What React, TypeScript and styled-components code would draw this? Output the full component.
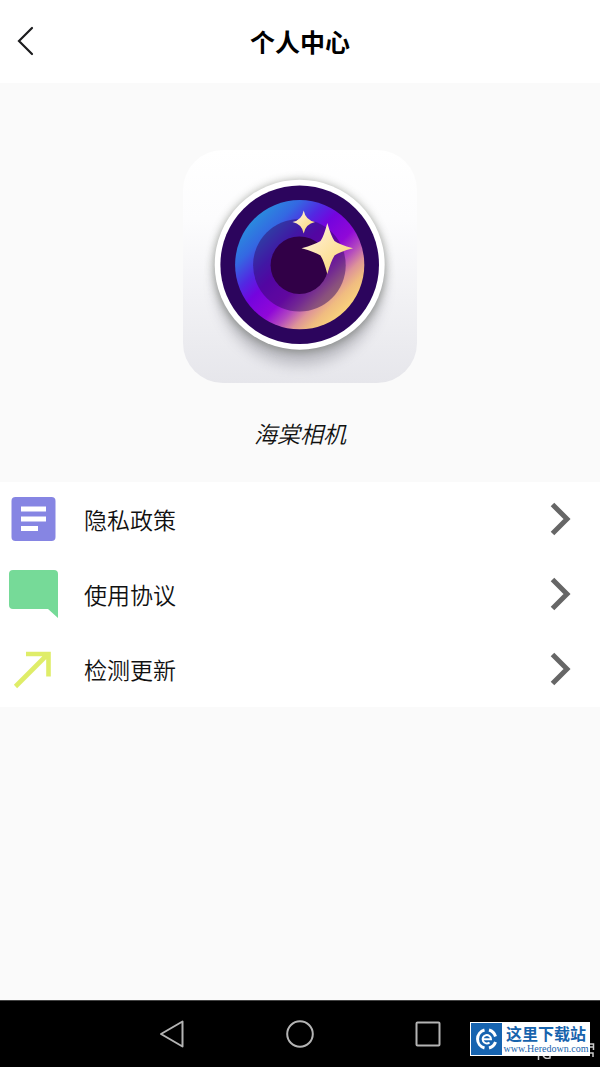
import React from "react";
import styled, { createGlobalStyle } from "styled-components";

const GlobalStyle = createGlobalStyle`
  * { box-sizing: border-box; }
  body {
    margin: 0;
    background: #fafafa;
    color: #111;
    font-family: "Noto Sans CJK SC", "Noto Sans", sans-serif;
  }
  button { margin: 0; padding: 0; border: 0; background: none; color: inherit; font: inherit; cursor: pointer; }
  svg { display: block; flex: none; }
`;

const Page = styled.div`
  display: flex;
  flex-direction: column;
  min-height: 100vh;
`;

const Header = styled.header`
  display: grid;
  grid-template-columns: 52px 1fr 52px;
  align-items: center;
  height: 83px;
  padding-bottom: 1px;
  background: #fff;
`;

const BackButton = styled.button`
  display: flex;
  align-items: center;
  justify-content: center;
  height: 52px;
`;

const Title = styled.h1`
  margin: 0;
  text-align: center;
  font-size: 25px;
  line-height: 34px;
  font-weight: 700;
  color: #000;
`;

const Main = styled.main`
  flex: 1;
`;

const Profile = styled.section`
  display: flex;
  flex-direction: column;
  align-items: center;
  gap: 32px;
  padding: 67px 0 32px;
`;

const AppName = styled.p`
  margin: 0;
  font-size: 23px;
  line-height: 34px;
  font-style: italic;
  font-weight: 350;
`;

const Menu = styled.ul`
  margin: 0;
  padding: 0;
  list-style: none;
  background: #fff;
`;

const MenuRow = styled.button`
  display: flex;
  align-items: center;
  width: 100%;
  height: 75px;
  padding: 0 27px 2px 8px;
  text-align: left;
`;

const MenuLabel = styled.span`
  flex: 1;
  padding-left: 25px;
  font-size: 23px;
  line-height: 34px;
  font-weight: 350;
`;

const SystemBar = styled.nav`
  position: relative;
  display: flex;
  justify-content: center;
  gap: 78px;
  height: 67px;
  background: #000;
  border-top: 1px solid #444;
`;

const SystemButton = styled.button`
  display: flex;
  align-items: center;
  justify-content: center;
  width: 50px;
  height: 66px;
`;

const Watermark = styled.div`
  position: absolute;
  right: 10px;
  bottom: 11px;
  display: flex;
  align-items: center;
  width: 120px;
  height: 34px;
  padding-left: 1px;
  background: #fff;
`;

const WatermarkText = styled.div`
  display: flex;
  flex-direction: column;
  align-items: center;
  flex: 1;
  color: #1763ad;
  white-space: nowrap;
`;

const SiteName = styled.span`
  font-size: 16px;
  line-height: 20px;
  font-weight: 700;
`;

const SiteUrl = styled.span`
  font-family: "Liberation Serif", serif;
  font-size: 10px;
  line-height: 12px;
`;

const Traces = styled.svg`
  position: absolute;
  right: 0;
  bottom: 0;
`;

const AppLogo = () => (
  <svg width="234" height="234" viewBox="0 0 234 234" role="img" aria-label="海棠相机">
    <defs>
      <linearGradient id="tile" x1="0" y1="0" x2="0" y2="1">
        <stop offset="0" stopColor="#fff" />
        <stop offset=".3" stopColor="#fcfcfd" />
        <stop offset="1" stopColor="#e6e6eb" />
      </linearGradient>
      <linearGradient id="lens" x1=".146" y1=".146" x2=".854" y2=".854">
        <stop offset="0" stopColor="#2a8ade" />
        <stop offset=".15" stopColor="#3468e2" />
        <stop offset=".3" stopColor="#5228e2" />
        <stop offset=".42" stopColor="#7404de" />
        <stop offset=".6" stopColor="#9008d8" />
        <stop offset=".71" stopColor="#b248c0" />
        <stop offset=".81" stopColor="#de9498" />
        <stop offset=".9" stopColor="#f0bc80" />
        <stop offset="1" stopColor="#f8d27c" />
      </linearGradient>
      <linearGradient id="star" x1="0" y1="0" x2="1" y2="1">
        <stop offset=".2" stopColor="#ffedd0" />
        <stop offset=".8" stopColor="#fbdc82" />
      </linearGradient>
      <filter id="soft" x="-30%" y="-30%" width="160%" height="160%">
        <feGaussianBlur stdDeviation="7" />
      </filter>
      <filter id="rim" x="-20%" y="-20%" width="140%" height="140%">
        <feGaussianBlur stdDeviation="4" />
      </filter>
    </defs>
    <rect width="234" height="233" rx="40" fill="url(#tile)" />
    <circle cx="116.7" cy="132" r="83" fill="#555562" opacity=".3" filter="url(#soft)" />
    <circle cx="116.7" cy="116" r="86" fill="#555a50" opacity=".5" filter="url(#rim)" />
    <circle cx="116.7" cy="114.7" r="85" fill="#fff" />
    <circle cx="116.7" cy="114.7" r="79.3" fill="#2c055d" />
    <circle cx="116.7" cy="114.7" r="64.6" fill="url(#lens)" />
    <circle cx="116.4" cy="115.2" r="46.3" fill="#2d0860" opacity=".48" />
    <circle cx="116.4" cy="115.2" r="28.8" fill="#310047" />
    <path d="M144.3 73Q148 86 151.500 91Q156 94.500 170 98.300Q156 102 151.500 105.500Q148 111 144.300 124Q141 111 137.500 105.500Q132 102 118.500 98.300Q132 94.500 137.500 91Q141 86 144.300 73Z" fill="url(#star)" />
    <path d="M120.7 60.5Q122.5 70 132 72Q122.5 74 120.7 83.5Q119 74 109.5 72Q119 70 120.7 60.5Z" fill="url(#star)" />
  </svg>
);

const PolicyIcon = () => (
  <svg width="51" height="51" viewBox="0 0 51 51" aria-hidden="true">
    <rect x="3.5" y="4" width="44" height="44" rx="4" fill="#8685e3" />
    <path d="M13 13.500h25v5H13zM13 23.500h25v5H13zM13 33h17v5H13z" fill="#fff" />
  </svg>
);

const AgreementIcon = () => (
  <svg width="51" height="51" viewBox="0 0 51 51" aria-hidden="true">
    <path d="M5 2H46Q50 2 50 6V50L40 41H5Q1 41 1 37V6Q1 2 5 2Z" fill="#76da98" />
  </svg>
);

const UpdateIcon = () => (
  <svg width="51" height="51" viewBox="0 0 51 51" aria-hidden="true">
    <path d="M7.5 43.5L40 11M18 11H40.5V33.5" fill="none" stroke="#dfed68" strokeWidth="4.6" />
  </svg>
);

const Chevron = () => (
  <svg width="24" height="34" viewBox="0 0 24 34" aria-hidden="true">
    <path d="M3.5 2.5L18 17L3.5 31.5" fill="none" stroke="#666" strokeWidth="5" />
  </svg>
);

const SiteLogo = () => (
  <svg width="31" height="32" viewBox="0 0 31 32" aria-hidden="true">
    <rect width="31" height="32" fill="#1764b0" />
    <g fill="none" stroke="#fff">
      <path d="M13.500 7A9.300 9.300 0 0 0 13.500 25M18 7A9.300 9.300 0 0 1 24.500 13.500M24.500 19A9.300 9.300 0 0 1 18 25" strokeWidth="3" />
      <path d="M12 16.300H20A4.200 4.200 0 1 0 18.500 19.500" strokeWidth="2" />
    </g>
  </svg>
);

const menu = [
  { label: "隐私政策", Icon: PolicyIcon },
  { label: "使用协议", Icon: AgreementIcon },
  { label: "检测更新", Icon: UpdateIcon },
];

export default function App() {
  return (
    <Page>
      <GlobalStyle />
      <Header>
        <BackButton aria-label="返回">
          <svg width="18" height="30" viewBox="0 0 18 30" aria-hidden="true">
            <path d="M15 2L2 15L15 28" fill="none" stroke="#1c1c1e" strokeWidth="2.200" strokeLinecap="round" />
          </svg>
        </BackButton>
        <Title>个人中心</Title>
      </Header>
      <Main>
        <Profile>
          <AppLogo />
          <AppName>海棠相机</AppName>
        </Profile>
        <Menu>
          {menu.map(({ label, Icon }) => (
            <li key={label}>
              <MenuRow>
                <Icon />
                <MenuLabel>{label}</MenuLabel>
                <Chevron />
              </MenuRow>
            </li>
          ))}
        </Menu>
      </Main>
      <SystemBar aria-label="系统导航">
        <SystemButton aria-label="后退">
          <svg width="28" height="30" viewBox="0 0 28 30" aria-hidden="true">
            <path d="M24.500 2.500V27.500L3 15Z" fill="none" stroke="#b4b4b4" strokeWidth="2" strokeLinejoin="round" />
          </svg>
        </SystemButton>
        <SystemButton aria-label="主屏幕">
          <svg width="28" height="28" viewBox="0 0 28 28" aria-hidden="true">
            <circle cx="14" cy="14" r="12.800" fill="none" stroke="#b4b4b4" strokeWidth="2" />
          </svg>
        </SystemButton>
        <SystemButton aria-label="最近任务">
          <svg width="26" height="26" viewBox="0 0 26 26" aria-hidden="true">
            <rect x="1.500" y="1.500" width="23" height="23" rx="1" fill="none" stroke="#b4b4b4" strokeWidth="2" />
          </svg>
        </SystemButton>
        <Traces width="70" height="26" viewBox="0 0 70 26" aria-hidden="true">
          <path d="M60 3H63.500V9M60 6H63M60 12H63V16M8.500 14V19M13 14Q14 18.500 20 17V14" fill="none" stroke="#ccc" strokeWidth="1.500" />
        </Traces>
        <Watermark>
          <SiteLogo />
          <WatermarkText>
            <SiteName>这里下载站</SiteName>
            <SiteUrl>www.Heredown.com</SiteUrl>
          </WatermarkText>
        </Watermark>
      </SystemBar>
    </Page>
  );
}
